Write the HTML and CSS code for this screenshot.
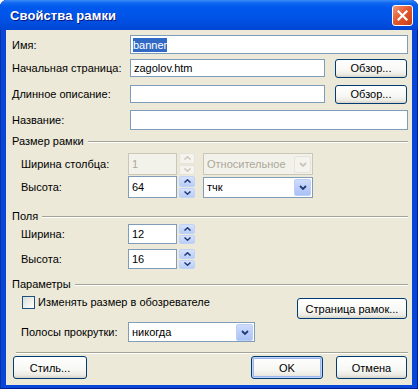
FILE: index.html
```html
<!DOCTYPE html>
<html lang="ru">
<head>
	<meta charset="UTF-8">
	<meta name="viewport" content="width=device-width, initial-scale=1.0">
	<title>Свойства рамки</title>
	<link rel="stylesheet" href="styles.css">
</head>
<body>
	<div class="window">
		<div class="titlebar">
			<span class="title">Свойства рамки</span>
			<span class="close">
				<svg width="11" height="11" viewBox="0 0 11 11"><path d="M1.5 1.5 L9.5 9.5 M9.5 1.5 L1.5 9.5" stroke="#fff" stroke-width="2.2" stroke-linecap="square"/></svg>
			</span>
		</div>
		<div class="client">
			<div class="row r-name">
				<span class="lbl">Имя:</span>
				<div class="edit fill"><span class="hilite">banner</span></div>
			</div>
			<div class="row r-start">
				<span class="lbl">Начальная страница:</span>
				<div class="edit browse-edit">zagolov.htm</div>
				<button class="btn browse">Обзор...</button>
			</div>
			<div class="row r-desc">
				<span class="lbl">Длинное описание:</span>
				<div class="edit browse-edit"></div>
				<button class="btn browse">Обзор...</button>
			</div>
			<div class="row r-title">
				<span class="lbl">Название:</span>
				<div class="edit fill"></div>
			</div>

			<div class="group g-size"><span>Размер рамки</span></div>
			<div class="row r-colw">
				<span class="lbl sub">Ширина столбца:</span>
				<div class="edit num disabled">1</div>
				<div class="spin disabled">
					<span class="up"><svg width="7" height="4" viewBox="0 0 7 4"><path d="M0.5 3.5 L3.5 0.8 L6.5 3.5" fill="none" stroke="currentColor" stroke-width="1.5"/></svg></span>
					<span class="down"><svg width="7" height="4" viewBox="0 0 7 4"><path d="M0.5 0.5 L3.5 3.2 L6.5 0.5" fill="none" stroke="currentColor" stroke-width="1.5"/></svg></span>
				</div>
				<div class="combo disabled">
					<span class="val">Относительное</span>
					<span class="drop"><svg width="8" height="5" viewBox="0 0 8 5"><path d="M1 1 L4 4 L7 1" fill="none" stroke="currentColor" stroke-width="1.8"/></svg></span>
				</div>
			</div>
			<div class="row r-height">
				<span class="lbl sub">Высота:</span>
				<div class="edit num">64</div>
				<div class="spin">
					<span class="up"><svg width="7" height="4" viewBox="0 0 7 4"><path d="M0.5 3.5 L3.5 0.8 L6.5 3.5" fill="none" stroke="currentColor" stroke-width="1.5"/></svg></span>
					<span class="down"><svg width="7" height="4" viewBox="0 0 7 4"><path d="M0.5 0.5 L3.5 3.2 L6.5 0.5" fill="none" stroke="currentColor" stroke-width="1.5"/></svg></span>
				</div>
				<div class="combo">
					<span class="val">тчк</span>
					<span class="drop"><svg width="8" height="5" viewBox="0 0 8 5"><path d="M1 1 L4 4 L7 1" fill="none" stroke="currentColor" stroke-width="1.8"/></svg></span>
				</div>
			</div>

			<div class="group g-margins"><span>Поля</span></div>
			<div class="row r-mw">
				<span class="lbl sub">Ширина:</span>
				<div class="edit num">12</div>
				<div class="spin">
					<span class="up"><svg width="7" height="4" viewBox="0 0 7 4"><path d="M0.5 3.5 L3.5 0.8 L6.5 3.5" fill="none" stroke="currentColor" stroke-width="1.5"/></svg></span>
					<span class="down"><svg width="7" height="4" viewBox="0 0 7 4"><path d="M0.5 0.5 L3.5 3.2 L6.5 0.5" fill="none" stroke="currentColor" stroke-width="1.5"/></svg></span>
				</div>
			</div>
			<div class="row r-mh">
				<span class="lbl sub">Высота:</span>
				<div class="edit num">16</div>
				<div class="spin">
					<span class="up"><svg width="7" height="4" viewBox="0 0 7 4"><path d="M0.5 3.5 L3.5 0.8 L6.5 3.5" fill="none" stroke="currentColor" stroke-width="1.5"/></svg></span>
					<span class="down"><svg width="7" height="4" viewBox="0 0 7 4"><path d="M0.5 0.5 L3.5 3.2 L6.5 0.5" fill="none" stroke="currentColor" stroke-width="1.5"/></svg></span>
				</div>
			</div>

			<div class="group g-params"><span>Параметры</span></div>
			<div class="params">
				<div class="params-left">
					<label class="check-row"><span class="checkbox"></span>Изменять размер в обозревателе</label>
					<div class="row r-scroll">
						<span class="lbl sub">Полосы прокрутки:</span>
						<div class="combo scroll">
							<span class="val">никогда</span>
							<span class="drop"><svg width="8" height="5" viewBox="0 0 8 5"><path d="M1 1 L4 4 L7 1" fill="none" stroke="currentColor" stroke-width="1.8"/></svg></span>
						</div>
					</div>
				</div>
				<button class="btn frames">Страница рамок...</button>
			</div>

			<div class="separator"></div>
			<div class="footer">
				<button class="btn style">Стиль...</button>
				<button class="btn ok">OK</button>
				<button class="btn cancel">Отмена</button>
			</div>
		</div>
	</div>
</body>
</html>
```

FILE: styles.css
```css
:root {
	--face: #ece9d8;
	--edit-border: #7f9db9;
	--line: #a5a597;
}

body {
	margin: 0;
	background: #fff;
	font-family: "Liberation Sans", Arial, sans-serif;
	font-size: 11px;
	color: #000;
}

.window {
	width: 418px;
	height: 389px;
	display: flex;
	flex-direction: column;
	background: #0846d8;
	border-radius: 7px 7px 0 0;
	box-shadow: inset 1px 0 0 #0831a8, inset -1px 0 0 #001d99, inset 0 -1px 0 #001d99;
}

/* title bar */
.titlebar {
	height: 30px;
	flex: none;
	display: flex;
	align-items: center;
	justify-content: space-between;
	padding: 0 5px 0 10px;
	border-radius: 7px 7px 0 0;
	background: linear-gradient(#3b8cf7 0, #1068f0 3px, #0058ee 7px, #0055e8 16px, #004bdc 25px, #0045d2 30px);
}

.title {
	color: #fff;
	font-weight: bold;
	font-size: 13px;
	text-shadow: 1px 1px 0 #0a1883;
	letter-spacing: 0.1px;
}

.close {
	width: 19px;
	height: 19px;
	border: 1px solid #fff;
	border-radius: 3px;
	display: flex;
	align-items: center;
	justify-content: center;
	background: linear-gradient(135deg, #f19a7e, #e35a30 45%, #c73d13);
}

/* dialog body */
.client {
	height: 355px;
	margin: 0 6px;
	padding: 0 4px 0 6px;
	background: var(--face);
	display: flex;
	flex-direction: column;
}

.row {
	display: flex;
	align-items: center;
}

.lbl {
	width: 118px;
	flex: none;
}

.lbl.sub {
	margin-left: 9px;
	width: 107px;
}

.edit {
	box-sizing: border-box;
	height: 100%;
	border: 1px solid var(--edit-border);
	background: #fff;
	padding: 0 3px;
	display: flex;
	align-items: center;
}

.edit.fill {
	flex: 1;
}

.edit.browse-edit {
	width: 195px;
}

.hilite {
	background: #316ac5;
	color: #fff;
	padding: 1px 0;
	margin-left: -1px;
}

.edit.num {
	width: 49px;
}

.edit.disabled {
	border-color: #c9c7ba;
	background: #f2f1ea;
	color: #aca899;
}

.r-name { margin-top: 5px; height: 19px; }
.r-start { margin-top: 5px; height: 18px; }
.r-desc { margin-top: 8px; height: 18px; }
.r-title { margin-top: 7px; height: 20px; }
.r-colw { margin-top: 5px; height: 22px; }
.r-height { margin-top: 1px; height: 22px; }
.r-mw { margin-top: 1px; height: 20px; }
.r-mh { margin-top: 5px; height: 20px; }

/* group captions with a rule */
.group {
	height: 14px;
	display: flex;
	align-items: center;
	gap: 4px;
}

.group::after {
	content: "";
	flex: 1;
	height: 1px;
	background: var(--line);
	box-shadow: 0 1px 0 #fff;
}

.g-size { margin-top: 4px; }
.g-margins { margin-top: 11px; }
.g-params { margin-top: 8px; }

/* up-down control */
.spin {
	width: 16px;
	height: 100%;
	margin-left: 2px;
	display: flex;
	flex-direction: column;
	gap: 1px;
}

.spin span {
	flex: 1;
	display: flex;
	align-items: center;
	justify-content: center;
	border-radius: 2px;
	color: #1f3a78;
	background: linear-gradient(#d6e2fd, #b8cdf8);
	border: 1px solid #c0d2f8;
}

.spin.disabled span {
	color: #c9c7ba;
	background: #f4f3ee;
	border-color: #e6e4da;
}

/* drop-down lists */
.combo {
	box-sizing: border-box;
	width: 110px;
	height: 21px;
	margin-left: 8px;
	border: 1px solid var(--edit-border);
	background: #fff;
	display: flex;
	align-items: center;
	padding: 1px 1px 1px 3px;
}

.r-colw .combo { height: 22px; }

.combo .val {
	flex: 1;
}

.combo .drop {
	width: 15px;
	height: 15px;
	display: flex;
	align-items: center;
	justify-content: center;
	border-radius: 2px;
	color: #1f3a78;
	background: linear-gradient(#cfdcfd, #a9c1f5);
	border: 1px solid #bccff7;
}

.combo.disabled {
	border-color: #c9c7ba;
	background: #f2f1ea;
	color: #aca899;
}

.combo.disabled .drop {
	color: #c9c7ba;
	background: #f4f3ee;
	border-color: #e6e4da;
}

.combo.scroll {
	width: 127px;
	height: 20px;
	margin-left: 0;
}

/* parameters block */
.params {
	margin-top: 4px;
	display: flex;
	align-items: flex-start;
}

.params-left {
	display: flex;
	flex-direction: column;
}

.check-row {
	height: 14px;
	margin-left: 10px;
	display: flex;
	align-items: center;
	gap: 3px;
}

.checkbox {
	box-sizing: border-box;
	width: 13px;
	height: 13px;
	border: 1px solid #1c5180;
	background: linear-gradient(135deg, #dcdcd5, #fff);
}

.r-scroll {
	margin-top: 13px;
	height: 20px;
}

/* push buttons */
.btn {
	box-sizing: border-box;
	font: inherit;
	color: #000;
	padding: 0;
	border: 1px solid #003c74;
	border-radius: 3px;
	background: linear-gradient(#fff 0, #f7f7f4 60%, #ecebe4 85%, #d8d2c6 100%);
	cursor: pointer;
}

.btn.browse {
	width: 72px;
	height: 19px;
	margin-left: 10px;
}

.btn.frames {
	width: 110px;
	height: 21px;
	margin-top: 3px;
	margin-left: auto;
	margin-right: 1px;
}

.separator {
	margin-top: 10px;
	height: 1px;
	margin-left: 4px;
	background: var(--line);
	box-shadow: 0 1px 0 #fff;
}

.footer {
	margin-top: 3px;
	display: flex;
	align-items: center;
	gap: 13px;
}

.footer .btn {
	height: 23px;
	width: 72px;
}

.btn.style {
	width: 74px;
	margin-left: 1px;
}

.btn.ok {
	margin-left: auto;
	box-shadow: inset 0 0 0 1px #c3d4fb, inset 0 0 0 2px #9cb7ef;
}

.btn.cancel {
	width: 71px;
	margin-right: 1px;
}
```
